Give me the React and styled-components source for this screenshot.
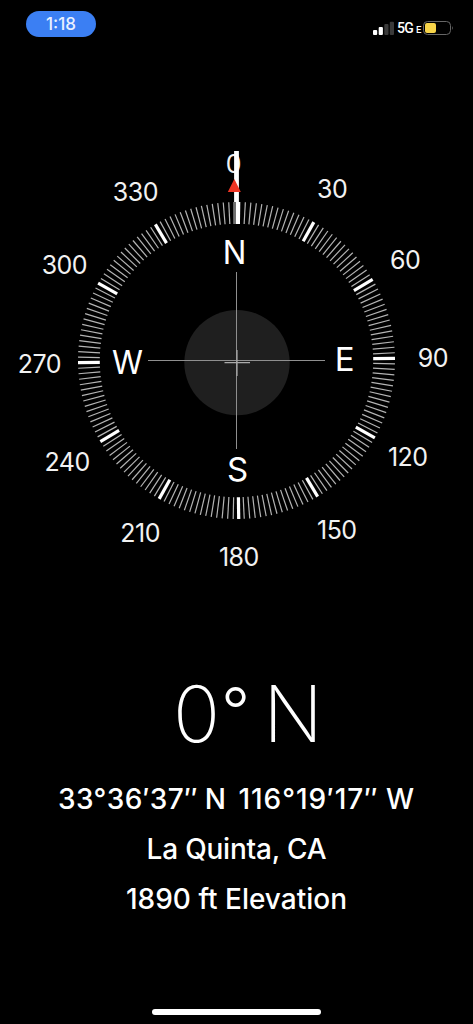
import React from "react";
import styled, { createGlobalStyle } from "styled-components";

const GlobalStyle = createGlobalStyle`
  body {
    margin: 0;
    background: #000;
  }
`;

const Screen = styled.main`
  display: flex;
  flex-direction: column;
  align-items: center;
  width: 473px;
  height: 1024px;
  overflow: hidden;
  background: #000;
  color: #fff;
  font-family: Inter, "Liberation Sans", sans-serif;
`;

const StatusBar = styled.header`
  display: flex;
  justify-content: space-between;
  align-items: flex-start;
  box-sizing: border-box;
  width: 100%;
  height: 120px;
  padding: 11px 19px 0 26px;
`;

const TimePill = styled.div`
  width: 70px;
  height: 26px;
  border-radius: 13px;
  background: #3b7ff3;
  color: #e9f1ff;
  font-size: 17px;
  font-weight: 500;
  line-height: 27px;
  text-align: center;
`;

const Indicators = styled.div`
  display: flex;
  align-items: center;
  height: 14px;
  margin-top: 10px;
`;

const SignalBars = styled.svg`
  display: block;
`;

const Network = styled.span`
  width: 24px;
  margin-left: 3px;
  padding-top: 2px;
  font-family: Roboto, sans-serif;
  font-size: 14px;
  font-weight: 500;
  line-height: 14px;
  letter-spacing: -0.7px;
  white-space: nowrap;
`;

const NetworkSuffix = styled.span`
  margin-left: 3px;
  font-size: 9.5px;
`;

const BatteryIcon = styled.svg`
  display: block;
  margin-left: 2px;
`;

const Dial = styled.svg`
  display: block;
  flex: none;
  font-family: inherit;
`;

const Heading = styled.h1`
  display: flex;
  width: 100%;
  height: 92px;
  margin: 68px 0 0;
  padding-left: 173px;
  box-sizing: border-box;
  font-size: 78px;
  font-weight: 250;
  line-height: 92px;
`;

const Degree = styled.span`
  width: 42px;
  margin-left: 1px;
  font-size: 63px;
  font-weight: 300;
  line-height: 85px;
`;

const Details = styled.section`
  width: 100%;
  margin-top: 14px;
`;

const Detail = styled.p`
  margin: 0;
  font-size: 28px;
  font-weight: 450;
  line-height: 50px;
  letter-spacing: ${props => props.$spacing || 0}px;
  text-align: center;
`;

const Coordinates = styled(Detail)`
  display: flex;
  justify-content: center;
  gap: 12px;
`;

const Coordinate = styled.span`
  letter-spacing: ${props => props.$spacing}px;
  word-spacing: -1px;
  white-space: nowrap;
`;

const HomeIndicator = styled.div`
  width: 169px;
  height: 6px;
  margin-top: auto;
  margin-bottom: 9px;
  border-radius: 3px;
  background: #fff;
`;

const CX = 236.5;
const CY = 360.5;
const HEADING = -0.8;

const BEARINGS = [0, 30, 60, 90, 120, 150, 180, 210, 240, 270, 300, 330];
const CARDINALS = [
  { letter: "N", bearing: 0, width: 23.6 },
  { letter: "E", bearing: 90 },
  { letter: "S", bearing: 180 },
  { letter: "W", bearing: 270, width: 31 }
];

const polar = (bearing, radius) => {
  const angle = ((bearing + HEADING) * Math.PI) / 180;
  return {
    x: CX + radius * Math.sin(angle),
    y: CY - radius * Math.cos(angle)
  };
};

const Tick = ({ bearing }) => {
  const inner = polar(bearing, 136.7);
  const outer = polar(bearing, 158.5);
  const major = bearing > 0 && bearing % 30 === 0;

  return (
    <line
      x1={inner.x}
      y1={inner.y}
      x2={outer.x}
      y2={outer.y}
      stroke={major ? "#fff" : "#b4b4b4"}
      strokeWidth={major ? 3.2 : 1.2}
    />
  );
};

const Compass = () => (
  <Dial width="473" height="480" viewBox="0 120 473 480">
    <circle cx="237" cy="362.6" r="52.7" fill="#1f1f1f" />
    <path d="M236.5 272V449M148 360.5H325" stroke="#8f8f8f" />
    <path d="M224.5 362.6H250M237 350V376" stroke="#aaa" strokeWidth="1.2" />
    {Array.from({ length: 180 }, (_, index) => (
      <Tick key={index} bearing={index * 2} />
    ))}
    {BEARINGS.map(bearing => {
      const { x, y } = polar(bearing, 196.7);
      return (
        <text
          key={bearing}
          x={x - 0.4}
          y={y + 9.3}
          fill="#f2f2f2"
          fontSize="25"
          letterSpacing="-0.5"
          textAnchor="middle"
        >
          {bearing}
        </text>
      );
    })}
    {CARDINALS.map(({ letter, bearing, width }) => {
      const { x, y } = polar(bearing, 108.7);
      return (
        <text
          key={letter}
          x={x - 0.4}
          y={y + 12}
          fill="#fff"
          fontSize="33"
          textAnchor="middle"
          textLength={width}
          lengthAdjust="spacingAndGlyphs"
        >
          {letter}
        </text>
      );
    })}
    <path d="M236.5 151V202" stroke="#fff" strokeWidth="4.8" />
    <path d="M234.6 202V224" stroke="#707070" strokeWidth="2.8" />
    <path d="M238 202V224" stroke="#fff" strokeWidth="4" />
    <path d="M234.3 179L240.8 192H227.8Z" fill="#ee3524" />
  </Dial>
);

const App = () => (
  <>
    <GlobalStyle />
    <Screen>
      <StatusBar>
        <TimePill>1:18</TimePill>
        <Indicators>
          <SignalBars width="21" height="14" viewBox="0 0 21 14">
            <rect x="0" y="9" width="4.2" height="5" rx="1" fill="#fff" />
            <rect x="5.7" y="6" width="4.2" height="8" rx="1" fill="#fff" />
            <rect x="11.3" y="3" width="4.2" height="11" rx="1" fill="#3a3a3a" />
            <rect x="16.8" y="0.7" width="4.2" height="13.3" rx="1" fill="#3a3a3a" />
          </SignalBars>
          <Network>
            5G<NetworkSuffix>E</NetworkSuffix>
          </Network>
          <BatteryIcon width="31" height="14" viewBox="0 0 31 14">
            <rect
              x="0.5"
              y="0.5"
              width="27"
              height="13"
              rx="4"
              fill="none"
              stroke="#666"
            />
            <rect x="2" y="2" width="11" height="10" rx="2" fill="#f7d449" />
            <path d="M29 5Q30.5 7 29 9Z" fill="#777" />
          </BatteryIcon>
        </Indicators>
      </StatusBar>
      <Compass />
      <Heading>
        <span>0</span>
        <Degree>°</Degree>
        <span>N</span>
      </Heading>
      <Details>
        <Coordinates>
          <Coordinate $spacing={0.4}>33°36′37″ N</Coordinate>
          <Coordinate $spacing={0.95}>116°19′17″ W</Coordinate>
        </Coordinates>
        <Detail $spacing={-0.2}>La Quinta, CA</Detail>
        <Detail>1890 ft Elevation</Detail>
      </Details>
      <HomeIndicator />
    </Screen>
  </>
);

export default App;
